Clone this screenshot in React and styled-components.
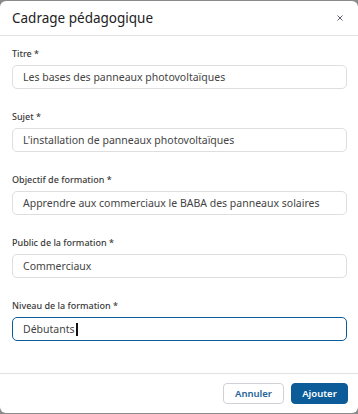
import React from "react";
import styled, { createGlobalStyle } from "styled-components";

const Global = createGlobalStyle`
  html, body { margin: 0; padding: 0; background: #8a8a8a; }
  body { font-family: "Noto Sans", "Open Sans", sans-serif; }
  * { box-sizing: border-box; }
`;

const Modal = styled.div`
  margin-top: 1px;
  width: 358px;
  height: 412px;
  background: #fff;
  border-radius: 6px;
  display: flex;
  flex-direction: column;
  overflow: hidden;
`;

const Header = styled.div`
  height: 35px;
  display: flex;
  align-items: center;
  justify-content: space-between;
  padding: 0 13px 0 12px;
  border-bottom: 1px solid #e2e2e2;
`;

const Title = styled.h1`
  margin: 0;
  font-size: 13.5px;
  font-weight: 400;
  color: #222;
`;

const Close = styled.button`
  border: none;
  background: none;
  padding: 0;
  width: 10px;
  height: 10px;
  display: flex;
  align-items: center;
  justify-content: center;
  cursor: pointer;
`;

const Body = styled.div`
  flex: 1;
  padding: 12px 11px 0 12px;
  display: flex;
  flex-direction: column;
  gap: 22px;
`;

const Field = styled.div`
  display: flex;
  flex-direction: column;
  gap: 5px;
`;

const Label = styled.label`
  font-size: 9px;
  font-weight: 500;
  color: #3a3a3a;
  line-height: 12px;
`;

const Input = styled.div`
  height: 24px;
  border: 1px solid ${(p) => (p.$focus ? "#0b5c99" : "#dedede")};
  border-radius: 5px;
  padding: 0 10px;
  display: flex;
  align-items: center;
  font-size: 10.5px;
  color: #444;
  white-space: nowrap;
`;

const Caret = styled.span`
  display: inline-block;
  width: 2px;
  height: 13px;
  background: #111;
  margin-left: 1px;
`;

const Footer = styled.div`
  height: 40px;
  border-top: 1px solid #e2e2e2;
  display: flex;
  align-items: center;
  justify-content: flex-end;
  gap: 7px;
  padding: 0 10px 0 0;
`;

const Button = styled.button`
  height: 21px;
  width: ${(p) => p.$w}px;
  border-radius: 4px;
  font-family: inherit;
  font-size: 9.5px;
  font-weight: 600;
  border: 1px solid ${(p) => (p.$primary ? "#0b5c99" : "#cfd3d8")};
  background: ${(p) => (p.$primary ? "#0b5c99" : "#fff")};
  color: ${(p) => (p.$primary ? "#fff" : "#1f639a")};
  padding: 0;
`;

const fields = [
  ["Titre", "Les bases des panneaux photovoltaïques"],
  ["Sujet", "L'installation de panneaux photovoltaïques"],
  ["Objectif de formation", "Apprendre aux commerciaux le BABA des panneaux solaires"],
  ["Public de la formation", "Commerciaux"],
  ["Niveau de la formation", "Débutants", true],
];

export default function App() {
  return (
    <>
      <Global />
      <Modal>
        <Header>
          <Title>Cadrage pédagogique</Title>
          <Close aria-label="Fermer">
            <svg width="6" height="6" viewBox="0 0 6 6">
              <path d="M0.5 0.5 L5.5 5.5 M5.5 0.5 L0.5 5.5" stroke="#5a6070" strokeWidth="1" />
            </svg>
          </Close>
        </Header>
        <Body>
          {fields.map(([label, value, focus]) => (
            <Field key={label}>
              <Label>{label} *</Label>
              <Input $focus={focus}>
                {value}
                {focus && <Caret />}
              </Input>
            </Field>
          ))}
        </Body>
        <Footer>
          <Button $w={61}>Annuler</Button>
          <Button $primary $w={57}>Ajouter</Button>
        </Footer>
      </Modal>
    </>
  );
}
